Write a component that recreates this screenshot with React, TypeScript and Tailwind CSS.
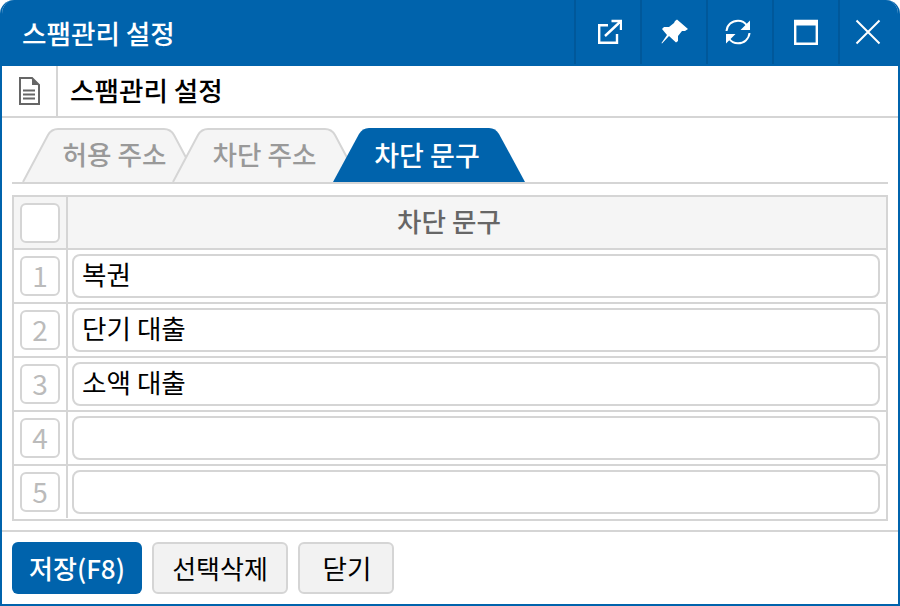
const rows = [
  { no: 1, text: '복권' },
  { no: 2, text: '단기 대출' },
  { no: 3, text: '소액 대출' },
  { no: 4, text: '' },
  { no: 5, text: '' },
]

function TabShape({ w, active }: { w: number; active?: boolean }) {
  const top = active ? 0 : 1
  const edge = active ? 0 : 1
  const d = `M${edge} 54 L26 ${top + 6} Q29.500 ${top} 36 ${top} L${w - 36} ${top} Q${w - 29.500} ${top} ${w - 26} ${top + 6} L${w - edge} 54`
  return (
    <svg className="absolute inset-0" width={w} height={54} viewBox={`0 0 ${w} 54`}>
      <path d={`${d} Z`} fill={active ? '#0063ac' : '#f5f5f5'} />
      {!active && <path d={d} fill="none" stroke="#d5d5d5" strokeWidth="2" />}
    </svg>
  )
}

function Tab({ label, w, active, className }: { label: string; w: number; active?: boolean; className: string }) {
  return (
    <div className={`relative h-[54px] pb-[2px] flex items-center justify-center ${className}`}>
      <TabShape w={w} active={active} />
      <span className={`relative font-medium leading-none ${active ? 'text-[27px] text-white' : 'text-[26.6px] text-[#999]'}`}>{label}</span>
    </div>
  )
}

function ToolBtn({ children, className = 'w-[66px]' }: { children: React.ReactNode; className?: string }) {
  return (
    <button className={`h-full flex items-center justify-center border-l-2 border-[#00589a] ${className}`}>
      {children}
    </button>
  )
}

export default function App() {
  return (
    <div
      className="w-[900px] h-[606px] flex flex-col bg-white border-2 border-t-0 border-[#0063ac] rounded-t-[14px] overflow-hidden"
      style={{ fontFamily: '"Noto Sans CJK KR", "Noto Sans", sans-serif' }}
    >
      <div className="h-[66px] shrink-0 flex items-center justify-between bg-[#0063ac] -mx-[2px] pl-[22px]">
        <div className="text-[26.6px] font-medium text-white leading-none">스팸관리 설정</div>
        <div className="flex h-full pb-[2px]">
          <ToolBtn className="w-[66px] pl-[2px]">
            <svg width="26" height="26" viewBox="0 0 26 26" fill="none" stroke="#fff" strokeWidth="2.400">
              <path d="M12 6.200H3.200V23.800H21V15" />
              <path d="M9 17 24 3M15.500 2H25V11" />
            </svg>
          </ToolBtn>
          <ToolBtn>
            <svg width="28" height="26" viewBox="0 0 28 26" fill="#fff">
              <path d="M17 .5 28 10 25 12 22 12 18 17 18 22 16 23.500 9 17 2 24.500 1.500 24 7 16 2 10 4 8 9 8 14 4 15 2z" />
            </svg>
          </ToolBtn>
          <ToolBtn>
            <svg className="mr-[4px]" width="26" height="26" viewBox="0 0 26 26" fill="none" stroke="#fff" strokeWidth="2">
              <path d="M1.500 12C2 6 7 1.700 13 1.700c3.500 0 7 1.800 9 4.800" />
              <path d="M24.500 14C24 20 19 24.300 13 24.300c-3.500 0-7-1.800-9-4.800" />
              <path d="M25 1.500V11h-9.500zM1 24.500V15h9.500z" fill="#fff" stroke="none" />
            </svg>
          </ToolBtn>
          <ToolBtn>
            <svg width="24" height="26" viewBox="0 0 24 26" fill="none" stroke="#fff" strokeWidth="2.400">
              <path d="M1.200 2h21.600v22.800H1.200z" />
              <path d="M0 1h24v5.500H0z" fill="#fff" stroke="none" />
            </svg>
          </ToolBtn>
          <ToolBtn className="w-[62px] pr-[4px]">
            <svg width="26" height="26" viewBox="0 0 26 26" fill="none" stroke="#fff" strokeWidth="2">
              <path d="M1.500 1.500 24.500 24.500M24.500 1.500 1.500 24.500" />
            </svg>
          </ToolBtn>
        </div>
      </div>

      <div className="h-[52px] shrink-0 flex border-b-2 border-[#d5d5d5]">
        <div className="w-[56px] flex items-center justify-center border-r-2 border-[#d5d5d5]">
          <svg width="22" height="28" viewBox="0 0 22 28" fill="none" stroke="#666" strokeWidth="2">
            <path d="M2 1h12l7 7v19H2z" />
            <path d="M14 1 21 8H14z" fill="#666" stroke="none" />
            <path d="M5 13.500h12M5 17.500h12M5 21.500h12" />
          </svg>
        </div>
        <div className="pl-[12px] pb-[2px] flex items-center text-[26.6px] font-medium text-black leading-none">스팸관리 설정</div>
      </div>

      <div className="mt-[10px] mx-[10px] h-[56px] shrink-0 flex pl-[10px] border-b-2 border-[#d5d5d5]">
        <Tab label="허용 주소" w={178} className="w-[178px] pl-[7px]" />
        <Tab label="차단 주소" w={189} className="w-[189px] -ml-[28px] pr-[4px]" />
        <Tab label="차단 문구" w={192} active className="w-[192px] -ml-[28px] pr-[4px]" />
      </div>

      <div className="mt-[11px] mx-[10px] border-2 border-[#d5d5d5] shrink-0">
        <div className="h-[53px] flex bg-[#f5f5f5] border-b-2 border-[#d5d5d5]">
          <div className="w-[54px] shrink-0 flex items-center justify-center border-r-2 border-[#d5d5d5]">
            <div className="w-[40px] h-[40px] bg-white border-2 border-[#d5d5d5] rounded-[6px]" />
          </div>
          <div className="flex-1 pr-[56px] pb-[2px] flex items-center justify-center text-[26.6px] font-medium text-[#666] leading-none">차단 문구</div>
        </div>
        {rows.map((r) => (
          <div key={r.no} className="h-[54px] flex border-b-2 last:border-b-0 last:h-[53px] last:pb-[1px] border-[#d5d5d5]">
            <div className="w-[54px] shrink-0 flex items-center justify-center border-r-2 border-[#d5d5d5]">
              <div className="w-[40px] h-[40px] pb-[2px] flex items-center justify-center bg-white border-2 border-[#d5d5d5] rounded-[6px] text-[28px] text-[#bbb] leading-none">
                {r.no}
              </div>
            </div>
            <div className="flex-1 flex items-center pl-[4px] pr-[6px]">
              <div className="w-full h-[44px] flex items-center pl-[8px] pb-[3px] border-2 border-[#d5d5d5] rounded-[8px] text-[26.6px] text-black leading-none">
                {r.text}
              </div>
            </div>
          </div>
        ))}
      </div>

      <div className="mt-[9px] border-t-2 border-[#d5d5d5] pt-[10px] px-[10px] flex gap-[10px]">
        <button className="w-[130px] h-[52px] rounded-[6px] bg-[#0063ac] text-white text-[26px] font-medium leading-none">저장(F8)</button>
        <button className="w-[136px] h-[52px] rounded-[6px] bg-[#f2f2f2] border-2 border-[#d5d5d5] text-black text-[26px] leading-none">선택삭제</button>
        <button className="w-[96px] h-[52px] pl-[2px] rounded-[6px] bg-[#f2f2f2] border-2 border-[#d5d5d5] text-black text-[26.6px] leading-none">닫기</button>
      </div>
    </div>
  )
}
